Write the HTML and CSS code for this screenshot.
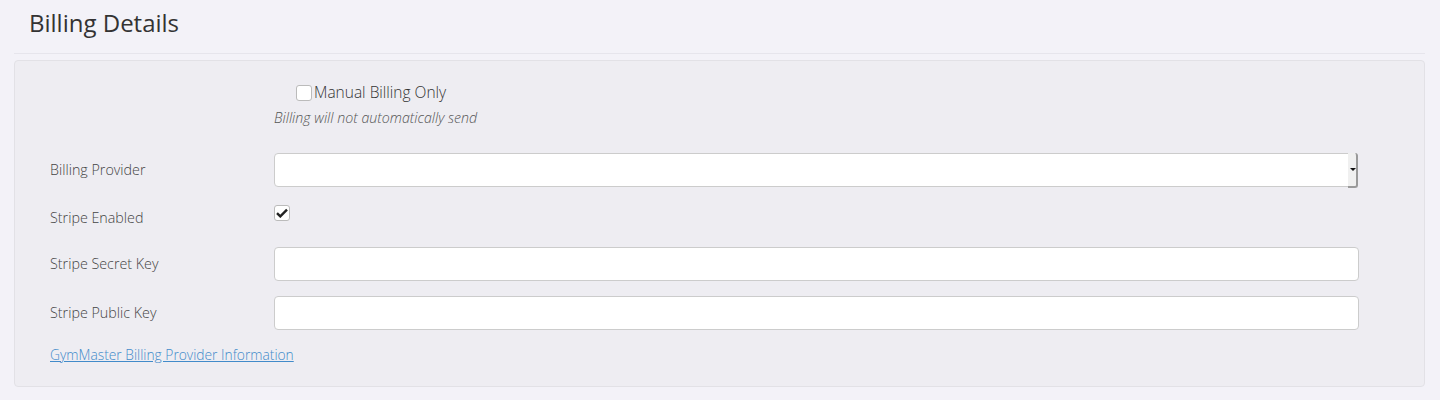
FILE: index.html
```html
<!DOCTYPE html>
<html lang="en">
  <head>
    <meta charset="UTF-8" />
    <meta name="viewport" content="width=device-width, initial-scale=1.0" />
    <title>Billing Details</title>
    <link rel="stylesheet" href="styles.css">
  </head>
  <body>
    <div class="page">
      <div class="page-header">
        <h1>Billing Details</h1>
      </div>

      <div class="well">
        <div class="row row-manual">
          <div class="label-col"></div>
          <div class="field-col">
            <label class="manual">
              <span class="check-box"></span>Manual Billing Only
            </label>
            <p class="help">Billing will not automatically send</p>
          </div>
        </div>

        <div class="row">
          <label class="label-col">Billing Provider</label>
          <div class="field-col">
            <div class="select">
              <span class="select-btn"><span class="caret"></span></span>
            </div>
          </div>
        </div>

        <div class="row row-check">
          <label class="label-col">Stripe Enabled</label>
          <div class="field-col">
            <span class="check-box checked">
              <svg width="12" height="10" viewBox="0 0 12 10">
                <path d="M1 5.2 L4.3 8.4 L11 1.6" fill="none" stroke="#222" stroke-width="2.4" />
              </svg>
            </span>
          </div>
        </div>

        <div class="row">
          <label class="label-col">Stripe Secret Key</label>
          <div class="field-col">
            <input type="text" class="text-input" />
          </div>
        </div>

        <div class="row">
          <label class="label-col">Stripe Public Key</label>
          <div class="field-col">
            <input type="text" class="text-input" />
          </div>
        </div>

        <a class="info-link" href="#">GymMaster Billing Provider Information</a>
      </div>
    </div>
  </body>
</html>
```

FILE: styles.css
```css
body {
  margin: 0;
  background-color: #f3f2f8;
  font-family: "Open Sans", "DejaVu Sans", sans-serif;
  font-size: 14px;
  font-weight: 300;
  color: #444;
}

.page {
  padding: 0 15px 0 14px;
}

.page-header {
  padding: 6px 0 0 15px;
  height: 47px;
  border-bottom: 1px solid #e6e5ec;
  margin-bottom: 6px;
}

.page-header h1 {
  margin: 0;
  font-size: 24px;
  font-weight: 400;
  line-height: 34px;
  color: #333;
}

.well {
  background-color: #eeedf2;
  border: 1px solid #e2e1e6;
  border-radius: 4px;
  padding: 19px 65px 21px 35px;
}

.row {
  display: flex;
  align-items: center;
  height: 34px;
  margin-bottom: 15px;
}

.label-col {
  width: 224px;
  flex-shrink: 0;
  font-size: 14.3px;
  line-height: 20px;
}

.field-col {
  flex: 1;
}

.row-manual {
  height: auto;
  margin-bottom: 25px;
  align-items: flex-start;
}

.manual {
  display: flex;
  align-items: center;
  gap: 2px;
  margin-left: 22px;
  margin-top: 2px;
  font-size: 15.5px;
  line-height: 20px;
  color: #333;
}

.manual .check-box {
  margin-top: 2px;
}

.help {
  margin: 6px 0 0 0;
  font-style: italic;
  font-size: 14.2px;
  line-height: 20px;
  color: #555;
}

.check-box {
  display: inline-flex;
  align-items: center;
  justify-content: center;
  width: 14px;
  height: 14px;
  border: 1px solid #bbb;
  border-radius: 3px;
  background-color: #fff;
  box-sizing: content-box;
}

.row-check {
  height: 30px;
  align-items: flex-start;
}

.row-check .label-col {
  margin-top: 6px;
}

.row-check .check-box {
  margin-top: 3px;
}

.select {
  position: relative;
  height: 32px;
  margin-right: 2px;
  background-color: #fff;
  border: 1px solid #ccc;
  border-radius: 4px 0 4px 4px;
}

.select-btn {
  position: absolute;
  top: -1px;
  right: -2px;
  bottom: -2px;
  width: 8px;
  background-color: #f0f0f0;
  border-right: 2px solid #9a9a9a;
  border-bottom: 2px solid #9a9a9a;
  border-radius: 0 3px 3px 0;
  display: flex;
  align-items: center;
  justify-content: center;
}

.caret {
  width: 0;
  height: 0;
  border-left: 3px solid transparent;
  border-right: 3px solid transparent;
  border-top: 3px solid #111;
  margin-left: 2px;
}

.text-input {
  display: block;
  width: 100%;
  height: 34px;
  padding: 6px 12px;
  border: 1px solid #ccc;
  border-radius: 4px;
  background-color: #fff;
  box-sizing: border-box;
  font: inherit;
}

.info-link {
  display: inline-block;
  font-size: 13.8px;
  line-height: 20px;
  margin-top: -1px;
  color: #428bca;
  text-decoration: underline;
}
```
